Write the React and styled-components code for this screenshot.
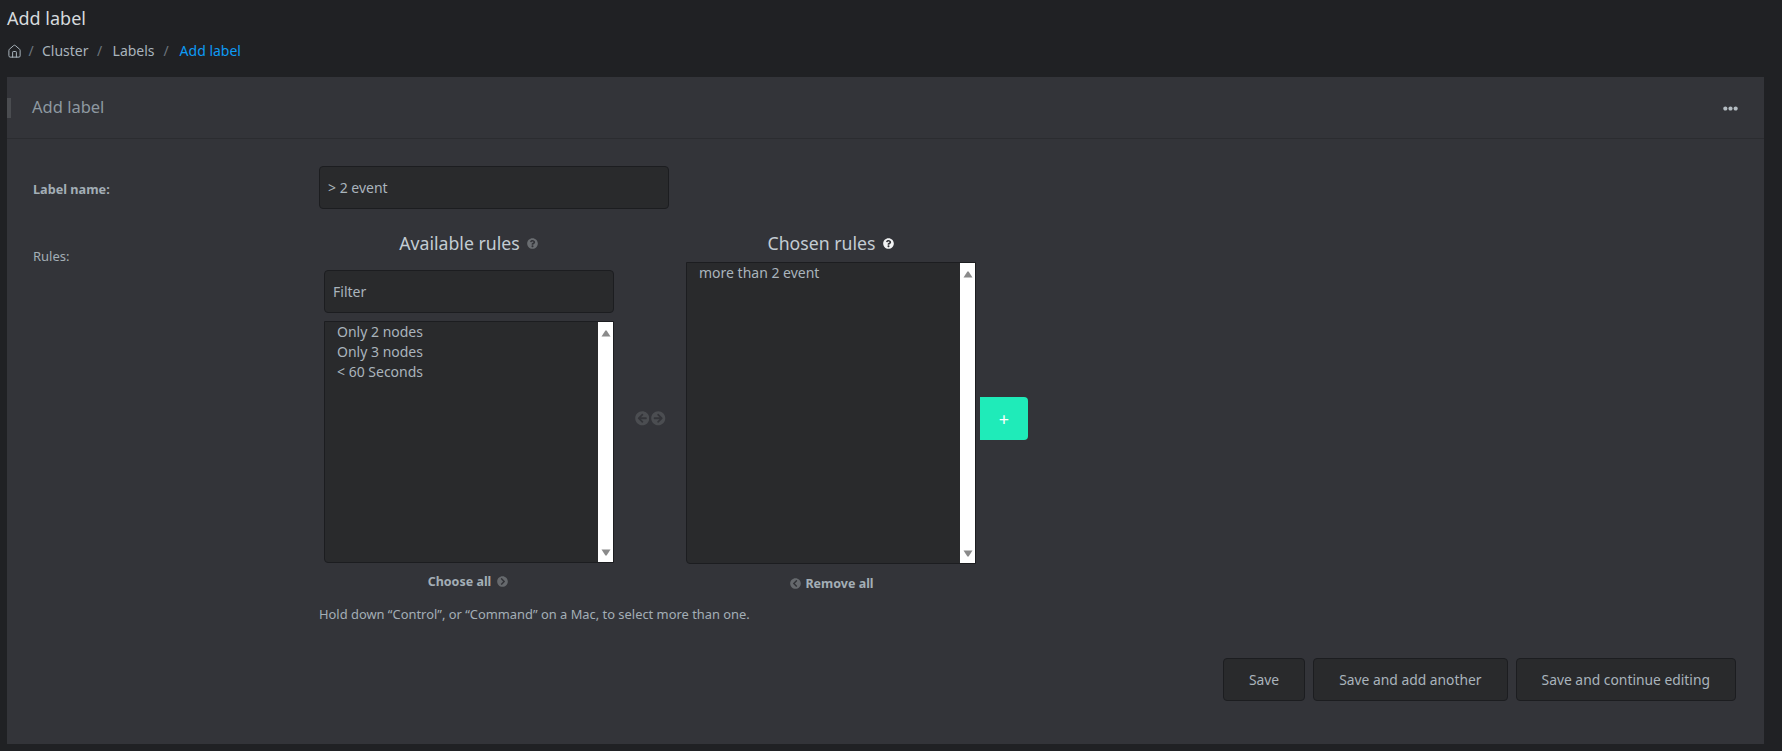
import React from 'react';
import styled, { createGlobalStyle } from 'styled-components';
import { House } from 'lucide-react';
import { FaQuestionCircle, FaArrowCircleLeft, FaArrowCircleRight, FaChevronCircleRight, FaChevronCircleLeft, FaEllipsisH } from 'react-icons/fa';

const GlobalStyle = createGlobalStyle`
  html, body { margin: 0; padding: 0; background: #202124; }
  body {
    font-family: "Noto Sans", "Open Sans", sans-serif;
    font-size: 14px;
    color: #a9b4bc;
  }
  * { box-sizing: border-box; }
`;

const Page = styled.div`
  height: 751px;
  padding: 0 18px 0 7px;
  overflow: hidden;
`;

const PageTitle = styled.h1`
  margin: 0;
  padding-top: 6px;
  font-size: 18px;
  font-weight: 400;
  line-height: 25px;
  color: #d6dadd;
`;

const Breadcrumb = styled.nav`
  display: flex;
  align-items: center;
  height: 20px;
  margin-top: 10px;
  color: #a9b4bc;
  line-height: 20px;
`;

const Sep = styled.span`
  width: ${p => p.$w}px;
  padding-right: 2px;
  text-align: center;
  color: #6d757c;
`;

const Current = styled.span`
  color: #0d9bf5;
`;

const Card = styled.section`
  margin-top: 16px;
  height: 667px;
  background: #333439;
`;

const CardHeader = styled.header`
  display: flex;
  align-items: center;
  justify-content: space-between;
  height: 62px;
  padding: 0 26px 0 25px;
  border-bottom: 1px solid #2b2c30;
  position: relative;
  &::before {
    content: '';
    position: absolute;
    left: 0;
    top: 21px;
    width: 4px;
    height: 20px;
    background: #4a4c50;
  }
`;

const CardTitle = styled.h2`
  margin: 0 0 2px;
  font-size: 16.5px;
  font-weight: 400;
  color: #8e99a1;
`;

const Dots = styled(FaEllipsisH)`
  font-size: 15px;
  margin-top: 2px;
  color: #b4bcc2;
`;

const Form = styled.form`
  padding: 27px 0 0 26px;
`;

const Row = styled.div`
  display: flex;
  align-items: flex-start;
`;

const Label = styled.label`
  width: 286px;
  flex: none;
  font-size: ${p => (p.$bold ? 12.7 : 13)}px;
  font-weight: ${p => (p.$bold ? 700 : 400)};
  padding-top: ${p => p.$top}px;
  color: #a3aeb6;
`;

const TextBox = styled.div`
  display: flex;
  align-items: center;
  width: ${p => p.$w}px;
  height: 43px;
  padding-left: ${p => p.$pad}px;
  background: #292a2c;
  border: 1px solid #1c1d20;
  border-radius: 4px;
  color: #a9b4bc;
`;

const RulesRow = styled(Row)`
  margin-top: 23px;
`;

const RulesBody = styled.div`
  display: flex;
  flex-direction: column;
`;

const Selector = styled.div`
  display: flex;
  align-items: flex-start;
  padding-left: 5px;
`;

const Column = styled.div`
  display: flex;
  flex-direction: column;
  width: ${p => p.$w}px;
`;

const ColTitle = styled.div`
  display: flex;
  align-items: center;
  justify-content: center;
  gap: 7px;
  height: 24px;
  margin-top: -1px;
  margin-bottom: 1px;
  padding-right: 1px;
  font-size: 17.7px;
  color: #c3ccd3;
`;

const HelpIcon = styled(FaQuestionCircle)`
  font-size: 11px;
  color: ${p => (p.$on ? '#f2f3f4' : '#6a6d71')};
`;

const FilterBox = styled(TextBox)`
  margin-top: 14px;
`;

const List = styled.div`
  display: flex;
  justify-content: space-between;
  height: ${p => p.$h}px;
  margin-top: ${p => p.$top}px;
  background: #292a2c;
  border: 1px solid #1c1d20;
  border-radius: 0 0 0 4px;
`;

const Options = styled.ul`
  list-style: none;
  margin: 0;
  padding: 0 0 0 ${p => p.$pad}px;
  line-height: 20px;
  color: #a9b4bc;
`;

const Scrollbar = styled.div`
  display: flex;
  flex-direction: column;
  justify-content: space-between;
  align-items: center;
  width: ${p => p.$w}px;
  padding: 8px 0 6px;
  background: #fff;
`;

const Arrow = styled.svg`
  display: block;
  width: 10px;
  height: 7px;
  fill: #8a8a8a;
`;

const Mover = styled.div`
  display: flex;
  justify-content: center;
  gap: 2px;
  width: 72px;
  margin-top: 179px;
  font-size: 14.5px;
  color: #4b4d51;
`;

const Bulk = styled.div`
  display: flex;
  align-items: center;
  justify-content: center;
  gap: ${p => p.$gap}px;
  margin-top: ${p => p.$top}px;
  font-size: 12.5px;
  font-weight: 700;
  color: #a3aeb6;
  transform: translateX(${p => p.$shift}px);
  svg { font-size: 11px; color: #66696d; }
`;

const AddButton = styled.button`
  width: 48px;
  height: 43px;
  margin: 165px 0 0 4px;
  padding: 0;
  border: 0;
  border-radius: 0 4px 4px 0;
  background: #1febb9;
  color: #fff;
  font-family: inherit;
  font-size: 18px;
`;

const Help = styled.p`
  margin: 13px 0 0;
  font-size: 12.9px;
  line-height: 18px;
  color: #a3aeb6;
`;

const Actions = styled.div`
  display: flex;
  justify-content: flex-end;
  gap: 8px;
  margin: 35px 28px 0 0;
`;

const ActionButton = styled.button`
  height: 43px;
  padding: 0 ${p => p.$pad}px;
  background: #292a2c;
  border: 1px solid #1c1d20;
  border-radius: 4px;
  color: #a9b4bc;
  font-family: inherit;
  font-size: 13.85px;
`;

const ScrollArrow = ({ down }) => (
  <Arrow viewBox="0 0 10 7">
    <path d={down ? 'M0.5 0.5 H9.5 L5.6 6.5 H4.4 Z' : 'M4.4 0.5 H5.6 L9.5 6.5 H0.5 Z'} />
  </Arrow>
);

export default function App() {
  return (
    <Page>
      <GlobalStyle />
      <PageTitle>Add label</PageTitle>
      <Breadcrumb>
        <House size={15} strokeWidth={1.6} />
        <Sep $w={20}>/</Sep>
        <span>Cluster</span>
        <Sep $w={24}>/</Sep>
        <span>Labels</span>
        <Sep $w={25}>/</Sep>
        <Current>Add label</Current>
      </Breadcrumb>
      <Card>
        <CardHeader>
          <CardTitle>Add label</CardTitle>
          <Dots />
        </CardHeader>
        <Form>
          <Row>
            <Label $bold $top={14}>Label name:</Label>
            <TextBox $w={350} $pad={8}>&gt; 2 event</TextBox>
          </Row>
          <RulesRow>
            <Label $top={15}>Rules:</Label>
            <RulesBody>
              <Selector>
                <Column $w={290}>
                  <ColTitle>Available rules <HelpIcon /></ColTitle>
                  <FilterBox $w={290} $pad={8}>Filter</FilterBox>
                  <List $h={242} $top={8}>
                    <Options $pad={12}>
                      <li>Only 2 nodes</li>
                      <li>Only 3 nodes</li>
                      <li>&lt; 60 Seconds</li>
                    </Options>
                    <Scrollbar $w={15}><ScrollArrow /><ScrollArrow down /></Scrollbar>
                  </List>
                  <Bulk $top={10} $shift={-1} $gap={6}>Choose all <FaChevronCircleRight /></Bulk>
                </Column>
                <Mover>
                  <FaArrowCircleLeft />
                  <FaArrowCircleRight />
                </Mover>
                <Column $w={290}>
                  <ColTitle>Chosen rules <HelpIcon $on /></ColTitle>
                  <List $h={302} $top={6}>
                    <Options $pad={12}>
                      <li>more than 2 event</li>
                    </Options>
                    <Scrollbar $w={15}><ScrollArrow /><ScrollArrow down /></Scrollbar>
                  </List>
                  <Bulk $top={11} $shift={1} $gap={4}><FaChevronCircleLeft /> Remove all</Bulk>
                </Column>
                <AddButton type="button">+</AddButton>
              </Selector>
              <Help>Hold down “Control”, or “Command” on a Mac, to select more than one.</Help>
            </RulesBody>
          </RulesRow>
          <Actions>
            <ActionButton $pad={25}>Save</ActionButton>
            <ActionButton $pad={25}>Save and add another</ActionButton>
            <ActionButton $pad={25}>Save and continue editing</ActionButton>
          </Actions>
        </Form>
      </Card>
    </Page>
  );
}
